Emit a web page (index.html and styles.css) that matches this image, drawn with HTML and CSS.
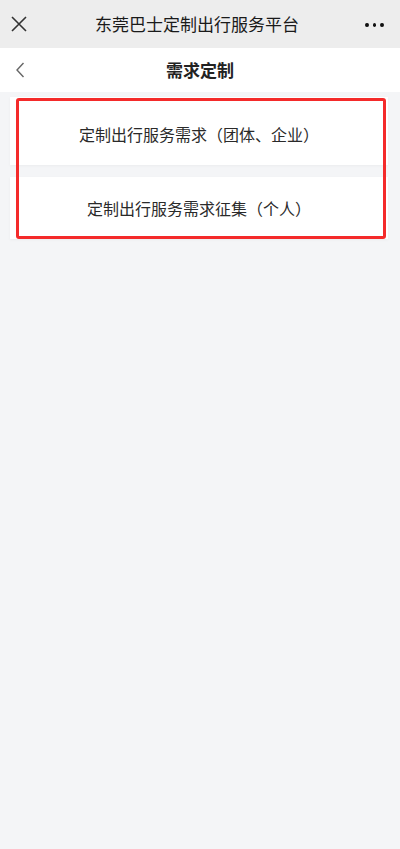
FILE: index.html
```html
<!DOCTYPE html>
<html lang="zh-CN">
<head>
    <meta charset="UTF-8">
    <title>需求定制</title>
    <link rel="stylesheet" href="styles.css">
</head>
<body>

<div class="topBar">
    <a href="javascript:;" class="btnClose">
        <svg width="16" height="16" viewBox="0 0 16 16"><path d="M1 1L15 15M15 1L1 15" stroke="#333" stroke-width="1.6" fill="none"/></svg>
    </a>
    <h1>东莞巴士定制出行服务平台</h1>
    <a href="javascript:;" class="btnMore"><i></i><i></i><i></i></a>
</div>

<div class="navBar">
    <a href="javascript:;" class="btnBack">
        <svg width="10" height="16" viewBox="0 0 10 16"><path d="M8.5 1L2 8L8.5 15" stroke="#666" stroke-width="1.4" fill="none"/></svg>
    </a>
    <h2>需求定制</h2>
</div>

<div class="list">
    <a href="javascript:;" class="item first">定制出行服务需求（团体、企业）</a>
    <a href="javascript:;" class="item">定制出行服务需求征集（个人）</a>
    <div class="mark"></div>
</div>

</body>
</html>
```

FILE: styles.css
```css
*{
    margin:0;
    padding:0;
    list-style: none;
    text-decoration: none;
}
body{
    width: 400px;
    height: 849px;
    background: #f4f5f7;
    font-family: "Noto Sans CJK SC", "Noto Sans", sans-serif;
    color: #222;
    overflow: hidden;
}
.topBar{
    height: 48px;
    background: #ededed;
    display: flex;
    align-items: center;
    justify-content: space-between;
    padding: 0 16px 0 11px;
}
.topBar h1{
    font-size: 17px;
    font-weight: 400;
    color: #1a1a1a;
    margin-left: 2px;
    margin-top: -1px;
}
.btnClose{
    display: flex;
    width: 16px;
    height: 16px;
}
.btnMore{
    display: flex;
    gap: 4px;
    width: 19px;
    margin-top: 1px;
}
.btnMore i{
    width: 4px;
    height: 4px;
    border-radius: 50%;
    background: #111;
}
.navBar{
    height: 44px;
    background: #fff;
    display: flex;
    align-items: center;
    justify-content: center;
    position: relative;
}
.navBar h2{
    font-size: 17px;
    font-weight: 600;
    color: #222;
    margin-top: -2px;
}
.btnBack{
    position: absolute;
    left: 15px;
    top: 14px;
    display: flex;
}
.list{
    position: relative;
    padding: 5px 12px 0 10px;
}
.item{
    display: flex;
    align-items: center;
    justify-content: center;
    height: 62px;
    background: #fff;
    font-size: 16px;
    color: #2a2a2a;
    box-shadow: 0 1px 3px rgba(0,0,0,0.04);
}
.item.first{
    height: 68px;
    margin-bottom: 12px;
    padding-top: 5px;
    box-sizing: border-box;
}
.mark{
    position: absolute;
    left: 16px;
    top: 6px;
    width: 370px;
    height: 141px;
    border: 3px solid #f42a2a;
    border-radius: 3px;
    box-sizing: border-box;
}
```
